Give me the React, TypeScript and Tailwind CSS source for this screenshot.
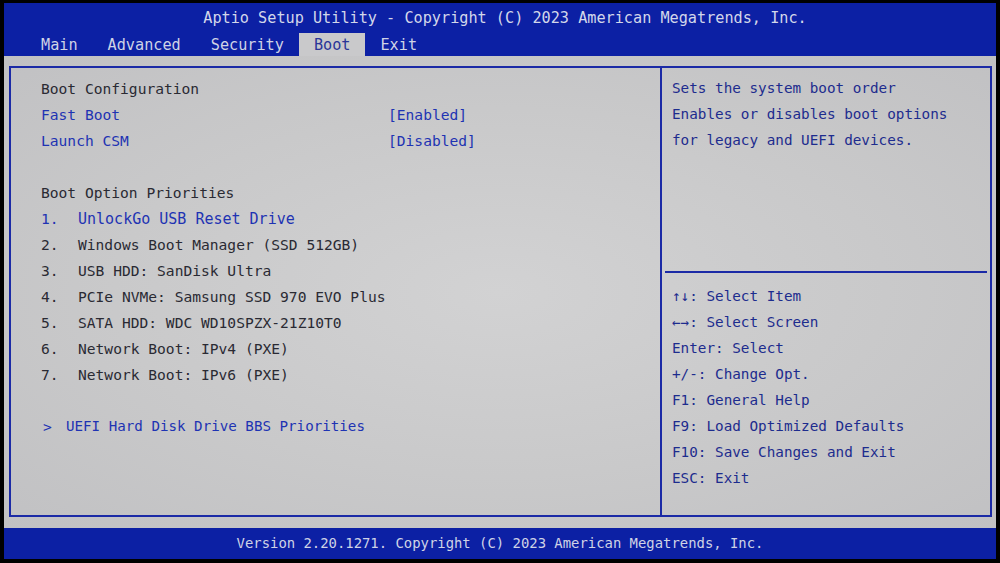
const tabs = ["Main", "Advanced", "Security", "Boot", "Exit"] as const;

const bootOptions = [
  "Windows Boot Manager (SSD 512GB)",
  "USB HDD: SanDisk Ultra",
  "PCIe NVMe: Samsung SSD 970 EVO Plus",
  "SATA HDD: WDC WD10SPZX-21Z10T0",
  "Network Boot: IPv4 (PXE)",
  "Network Boot: IPv6 (PXE)",
];

const keyHelp = [
  "↑↓: Select Item",
  "←→: Select Screen",
  "Enter: Select",
  "+/-: Change Opt.",
  "F1: General Help",
  "F9: Load Optimized Defaults",
  "F10: Save Changes and Exit",
  "ESC: Exit",
];

const mono = "font-['DejaVu_Sans_Mono','Liberation_Mono',monospace]";

export default function App() {
  return (
    <div className={`h-[563px] w-[1000px] overflow-hidden bg-black pt-[3px] pl-[4px] pr-[4px] ${mono} text-[14.6px]`}>
      <div className="flex h-[556px] flex-col">
        {/* header */}
        <div className="flex h-[53px] flex-col bg-[#0c20a4]">
          <div className="flex h-[30px] items-center justify-center pl-[10px] text-[15.2px] text-[#d3d7ea]">
            Aptio Setup Utility - Copyright (C) 2023 American Megatrends, Inc.
          </div>
          <div className="flex h-[23px] items-end pl-[22px] text-[15.2px]">
            {tabs.map((tab) => (
              <div
                key={tab}
                className={`flex h-[23px] items-center px-[15px] pt-[2px] ${
                  tab === "Boot" ? "bg-[#c9c9cb] text-[#2a3598]" : "text-[#cfd3e6]"
                }`}
              >
                {tab}
              </div>
            ))}
          </div>
        </div>

        {/* body */}
        <div className="h-[472px] bg-[radial-gradient(ellipse_at_center,#d2d2d3_0%,#c9c9ca_55%,#c1c1c3_100%)] pt-[10px] pl-[5px] pr-[4px] pb-[11px]">
          <div className="flex h-full border-2 border-[#1b2aa6]">
            <div className="w-[651px] border-r-2 border-[#1b2aa6] pt-[8px] pl-[30px]">
              <div className="flex h-[26px] items-center text-[#2a2a33]">Boot Configuration</div>
              <div className="flex h-[26px] items-center text-[#1e33b3]">
                <span className="w-[347px]">Fast Boot</span>
                <span>[Enabled]</span>
              </div>
              <div className="flex h-[26px] items-center text-[#1e33b3]">
                <span className="w-[347px]">Launch CSM</span>
                <span>[Disabled]</span>
              </div>
              <div className="h-[26px]" />
              <div className="flex h-[26px] items-center text-[#2a2a33]">Boot Option Priorities</div>
              <div className="flex h-[26px] items-center text-[#1e33b3]">
                <span className="w-[37px]">1.</span>
                <span className="text-[15px]">UnlockGo USB Reset Drive</span>
              </div>
              {bootOptions.map((opt, i) => (
                <div key={opt} className="flex h-[26px] items-center text-[#2a2a33]">
                  <span className="w-[37px]">{i + 2}.</span>
                  <span>{opt}</span>
                </div>
              ))}
              <div className="h-[26px]" />
              <div className="flex h-[26px] items-center text-[#1e33b3]">
                <span className="w-[25px] pl-[2px]">&gt;</span>
                <span className="text-[14.2px]">UEFI Hard Disk Drive BBS Priorities</span>
              </div>
            </div>

            <div className="flex flex-1 flex-col pt-[8px] text-[14.3px] text-[#1d2c8e]">
              <div className="h-[195px] pl-[10px]">
                <div className="flex h-[26px] items-center">Sets the system boot order</div>
                <div className="flex h-[26px] items-center">Enables or disables boot options</div>
                <div className="flex h-[26px] items-center">for legacy and UEFI devices.</div>
              </div>
              <div className="mx-[3px] h-[2px] bg-[#1b2aa6]" />
              <div className="pt-[11px] pl-[10px]">
                {keyHelp.map((line) => (
                  <div key={line} className="flex h-[26px] items-center">
                    {line}
                  </div>
                ))}
              </div>
            </div>
          </div>
        </div>

        {/* footer */}
        <div className="flex h-[31px] items-center justify-center bg-[#0c20a4] text-[13.9px] text-[#cfd3e6]">
          Version 2.20.1271. Copyright (C) 2023 American Megatrends, Inc.
        </div>
      </div>
    </div>
  );
}
